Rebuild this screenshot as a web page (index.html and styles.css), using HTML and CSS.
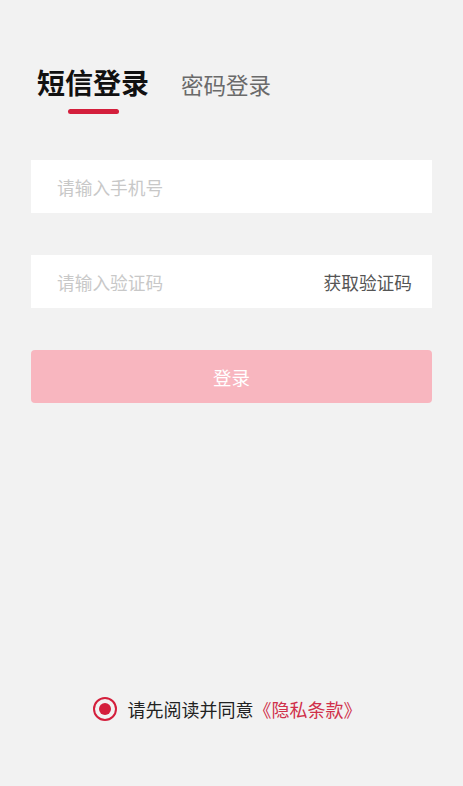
FILE: index.html
```html
<!DOCTYPE html>
<html lang="zh-CN">
<head>
<meta charset="utf-8" />
<meta name="viewport" content="width=device-width, initial-scale=1" />
<title>登录</title>
<link rel="stylesheet" href="styles.css">
</head>
<body>
<div class="page">
  <div class="tabs">
    <div class="tab active">短信登录</div>
    <div class="tab">密码登录</div>
  </div>
  <form class="login-form" action="" method="get">
    <div class="field">
      <input type="text" name="phone" placeholder="请输入手机号" />
    </div>
    <div class="field">
      <input type="text" name="code" placeholder="请输入验证码" />
      <span class="get-code">获取验证码</span>
    </div>
    <button type="button" class="btn-login">登录</button>
  </form>
  <div class="agree">
    <span class="radio"><span class="dot"></span></span>
    <span>请先阅读并同意</span><a class="link" href="#">《隐私条款》</a>
  </div>
</div>
</body>
</html>
```

FILE: styles.css
```css
html, body {
  margin: 0;
  padding: 0;
  background: #f2f2f2;
  font-family: "Noto Sans CJK SC", "Noto Sans", sans-serif;
}
.page {
  min-height: 100vh;
  box-sizing: border-box;
  padding: 0 31px 64px;
  display: flex;
  flex-direction: column;
}
.tabs {
  display: flex;
  align-items: baseline;
  gap: 32px;
  padding: 62px 0 0 6px;
}
.tab {
  font-size: 22.5px;
  line-height: 40px;
  color: #6a6a6a;
}
.tab.active {
  position: relative;
  font-size: 28px;
  font-weight: bold;
  color: #111;
}
.tab.active::after {
  content: "";
  position: absolute;
  left: 50%;
  bottom: -12px;
  width: 51px;
  height: 5px;
  margin-left: -25.5px;
  border-radius: 3px;
  background: #d41f3c;
}
.login-form {
  display: flex;
  flex-direction: column;
  gap: 42px;
  margin-top: 56px;
}
.field {
  display: flex;
  align-items: center;
  height: 53px;
  background: #fff;
  padding: 0 20px 0 26px;
}
.field input {
  flex: 1;
  min-width: 0;
  border: 0;
  outline: none;
  background: transparent;
  padding: 0;
  font-family: inherit;
  font-size: 17.7px;
  color: #333;
}
.field input::placeholder {
  color: #c8c8c8;
}
.get-code {
  font-size: 17.7px;
  color: #555;
}
.btn-login {
  height: 53px;
  border: 0;
  border-radius: 4px;
  background: #f8b6bf;
  color: #fff;
  font-family: inherit;
  font-size: 18.5px;
}
.agree {
  margin-top: auto;
  display: flex;
  align-items: center;
  justify-content: center;
  font-size: 18px;
  color: #222;
  padding-right: 9px;
}
.radio {
  box-sizing: border-box;
  width: 24px;
  height: 24px;
  border: 2.5px solid #d41f3c;
  border-radius: 50%;
  display: flex;
  align-items: center;
  justify-content: center;
  margin-right: 11px;
}
.radio .dot {
  width: 12px;
  height: 12px;
  border-radius: 50%;
  background: #d41f3c;
}
.link {
  color: #d0304a;
  text-decoration: none;
}
```
